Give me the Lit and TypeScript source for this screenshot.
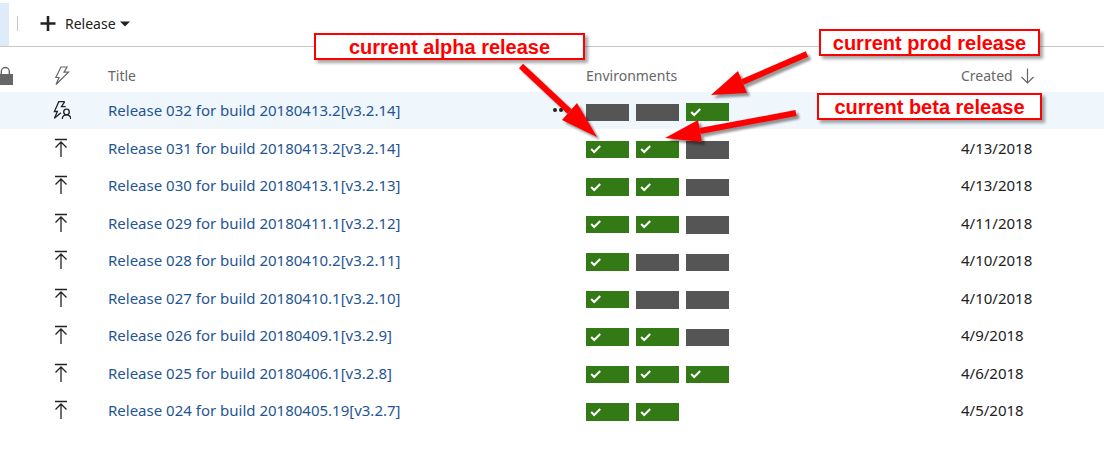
import { LitElement, html, css, svg } from "lit";
import { customElement } from "lit/decorators.js";

type Env = "ok" | "idle";
interface Release {
  title: string;
  envs: Env[];
  created: string;
  selected?: boolean;
}

const release = (title: string, envs: string, created: string, selected = false): Release => ({
  title,
  envs: [...envs].map((c) => (c === "x" ? "ok" : "idle")),
  created,
  selected,
});

const RELEASES: Release[] = [
  release("Release 032 for build 20180413.2[v3.2.14]", "--x", "", true),
  release("Release 031 for build 20180413.2[v3.2.14]", "xx-", "4/13/2018"),
  release("Release 030 for build 20180413.1[v3.2.13]", "xx-", "4/13/2018"),
  release("Release 029 for build 20180411.1[v3.2.12]", "xx-", "4/11/2018"),
  release("Release 028 for build 20180410.2[v3.2.11]", "x--", "4/10/2018"),
  release("Release 027 for build 20180410.1[v3.2.10]", "x--", "4/10/2018"),
  release("Release 026 for build 20180409.1[v3.2.9]", "xx-", "4/9/2018"),
  release("Release 025 for build 20180406.1[v3.2.8]", "xxx", "4/6/2018"),
  release("Release 024 for build 20180405.19[v3.2.7]", "xx", "4/5/2018"),
];

const lockIcon = html`<svg class="icon" width="14" height="20" viewBox="0 0 14 20" aria-label="Locked">
  <path d="M1.300 9V5.500a4 4 0 0 1 8 0V9" fill="none" stroke="#666" stroke-width="1.4" />
  <rect x="-1" y="8" width="14" height="11" fill="#666" />
</svg>`;

const boltIcon = html`<svg class="icon" width="20" height="20" viewBox="0 0 20 20" aria-label="Trigger">
  <path d="M10 1h6l-3 5.200h4.500L5 18.500l3-7H4.800z" fill="none" stroke="#666" stroke-width="1.2" />
</svg>`;

const manualIcon = html`<svg class="icon" width="20" height="20" viewBox="0 0 20 20" aria-label="Manual">
  <g fill="none" stroke="#222" stroke-width="1.3">
    <path d="M13.7 1.700H7.800L3.400 11.500h3L3.400 18.300l6.500-5.600M13.700 1.700l-3.200 5h4.200" />
    <circle cx="15.5" cy="12" r="2.8" />
    <path d="M11.200 19c.2-2.800 1.800-4.200 4.300-4.200s4.100 1.400 4.300 4.200" />
  </g>
</svg>`;

const autoIcon = html`<svg class="icon" width="20" height="20" viewBox="0 0 20 20" aria-label="Automatic">
  <path d="M4 1.500h12M10 19V4M4.500 9.500 10 4l5.500 5.500" fill="none" stroke="#222" stroke-width="1.3" />
</svg>`;

const check = html`<svg class="check" width="12" height="10" viewBox="0 0 12 10" aria-label="Succeeded">
  <path d="M1.200 5 4.200 8 10.200 2" fill="none" stroke="#fff" stroke-width="2" />
</svg>`;

const arrow = (tail: number[], tip: number[], a: number[], b: number[]) => svg`
  <line x1=${tail[0]} y1=${tail[1]} x2=${(a[0] + b[0]) / 2} y2=${(a[1] + b[1]) / 2} stroke="#f00" stroke-width="6" />
  <polygon points=${[tip, a, b].map((p) => p.join(",")).join(" ")} fill="#f00" />`;

@customElement("app-root")
export class AppRoot extends LitElement {
  static styles = css`
    :host {
      display: block;
      position: relative;
      min-height: 100vh;
      overflow: hidden;
      background: #fff;
      color: #222;
      font-family: "Segoe UI", "Noto Sans", sans-serif;
      font-size: 15px;
      line-height: 20px;
    }
    .toolbar {
      display: flex;
      align-items: center;
      height: 46px;
      border-bottom: 1px solid #c8c8c8;
    }
    .tab {
      align-self: flex-end;
      width: 9px;
      height: 43px;
      background: #deebf9;
    }
    .separator {
      width: 1px;
      height: 15px;
      margin: 0 14px 0 8px;
      background: #c8c8c8;
    }
    button {
      display: flex;
      align-items: center;
      border: 0;
      padding: 0;
      background: none;
      color: inherit;
      font: inherit;
      cursor: pointer;
    }
    .new-release {
      padding: 2px 8px 0;
      font-size: 14px;
    }
    .plus {
      margin-right: 9px;
    }
    .caret {
      margin-left: 4px;
    }
    .releases {
      width: 100%;
      table-layout: fixed;
      border-collapse: collapse;
    }
    .col-lock {
      width: 40px;
    }
    .col-trigger {
      width: 60px;
    }
    .col-envs {
      width: 375px;
    }
    .col-created {
      width: 151px;
    }
    th,
    td {
      padding: 0 8px 1px;
      text-align: left;
      white-space: nowrap;
      vertical-align: middle;
    }
    th {
      height: 32px;
      padding: 13px 8px 0;
      color: #666;
      font-size: 14px;
      font-weight: 400;
    }
    .lock {
      padding-left: 0;
    }
    .trigger {
      padding-left: 11px;
    }
    .icon {
      display: block;
    }
    tr {
      height: 37px;
    }
    tbody tr:nth-child(even) {
      height: 38px;
    }
    .selected {
      background: #eff6fc;
    }
    .title,
    .sort {
      display: flex;
      align-items: center;
      justify-content: space-between;
    }
    .sort {
      justify-content: flex-start;
      gap: 8px;
    }
    a {
      color: #1f5594;
      text-decoration: none;
    }
    .envs {
      display: flex;
      align-items: flex-end;
      gap: 7px;
      height: 18px;
      padding-top: 4px;
    }
    .env {
      display: flex;
      align-items: center;
      box-sizing: border-box;
      width: 43px;
      height: 17px;
      padding-left: 4px;
      background: #555;
    }
    .ok {
      background: #337a17;
    }
    tr:nth-child(odd) .ok,
    tr:nth-child(even) .idle {
      height: 18px;
    }
    tr:nth-child(even) .envs {
      align-items: flex-start;
    }
    .arrows {
      position: absolute;
      left: 0;
      top: 0;
      pointer-events: none;
      filter: drop-shadow(3px 3px 1px rgba(0, 0, 0, 0.4));
    }
    .note {
      position: absolute;
      box-sizing: border-box;
      height: 27px;
      border: 2px solid #f00;
      background: #fff;
      box-shadow: 3px 3px 3px rgba(0, 0, 0, 0.35);
      color: #f00;
      font: bold 20px/24px "Liberation Sans", Arial, sans-serif;
      text-align: center;
    }
    .alpha {
      left: 314px;
      top: 33px;
      width: 271px;
    }
    .prod {
      left: 819px;
      top: 29px;
      width: 221px;
    }
    .beta {
      left: 817px;
      top: 93px;
      width: 225px;
    }
  `;

  private row(r: Release) {
    return html`<tr class=${r.selected ? "selected" : ""}>
      <td class="lock"></td>
      <td class="trigger">${r.selected ? manualIcon : autoIcon}</td>
      <td>
        <div class="title">
          <a href="#">${r.title}</a>
          ${r.selected
            ? html`<button class="more" aria-label="More actions">
                <svg width="18" height="6" viewBox="0 0 18 6" fill="#222">
                  <circle cx="3" cy="3" r="2" />
                  <circle cx="9" cy="3" r="2" />
                  <circle cx="15" cy="3" r="2" />
                </svg>
              </button>`
            : ""}
        </div>
      </td>
      <td>
        <div class="envs">${r.envs.map((e) => html`<span class="env ${e}">${e === "ok" ? check : ""}</span>`)}</div>
      </td>
      <td>${r.created}</td>
    </tr>`;
  }

  render() {
    return html`
      <div class="toolbar">
        <span class="tab"></span>
        <span class="separator"></span>
        <button class="new-release">
          <svg class="plus" width="16" height="16" viewBox="0 0 16 16">
            <path d="M8 0v15M0.500 7.500h15" stroke="#222" stroke-width="2.6" />
          </svg>
          Release
          <svg class="caret" width="10" height="6" viewBox="0 0 10 6"><path d="M0 0.500h10L5 5.500z" fill="#222" /></svg>
        </button>
      </div>
      <table class="releases">
        <colgroup>
          <col class="col-lock" />
          <col class="col-trigger" />
          <col />
          <col class="col-envs" />
          <col class="col-created" />
        </colgroup>
        <thead>
          <tr>
            <th class="lock">${lockIcon}</th>
            <th class="trigger">${boltIcon}</th>
            <th>Title</th>
            <th>Environments</th>
            <th>
              <span class="sort"
                >Created
                <svg width="14" height="16" viewBox="0 0 14 16">
                  <path d="M6.500 0.500v14M0.500 9l6 6 6-6" fill="none" stroke="#666" stroke-width="1.2" />
                </svg>
              </span>
            </th>
          </tr>
        </thead>
        <tbody>
          ${RELEASES.map((r) => this.row(r))}
        </tbody>
      </table>
      <svg class="arrows" width="1104" height="200" viewBox="0 0 1104 200" aria-hidden="true">
        ${arrow([521, 66], [597, 137], [577, 103], [562, 120])}
        ${arrow([807, 54], [711, 95], [738, 71], [747, 93])}
        ${arrow([796, 113], [665, 138], [698, 120], [702, 142])}
      </svg>
      <div class="note alpha">current alpha release</div>
      <div class="note prod">current prod release</div>
      <div class="note beta">current beta release</div>
    `;
  }
}
